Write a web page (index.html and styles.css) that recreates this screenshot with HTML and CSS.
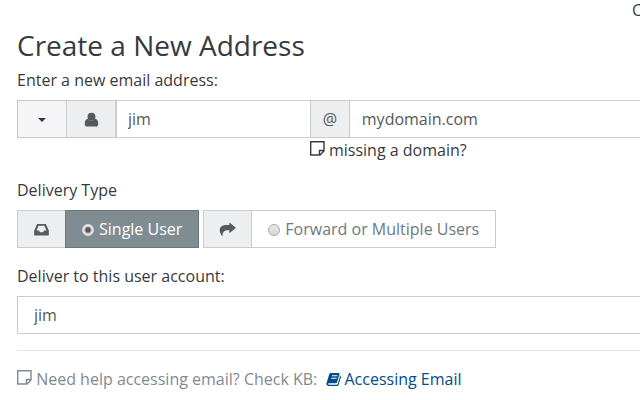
FILE: index.html
```html
<!DOCTYPE html>
<html lang="en">
  <head>
    <meta charset="utf-8" />
    <title>Create a New Address</title>
    <link rel="stylesheet" href="styles.css">
  </head>
  <body>
    <div class="topbar">C</div>
    <form class="address-form">
      <h1>Create a New Address</h1>
      <label class="form-label" for="mailbox">Enter a new email address:</label>
      <div class="address-row">
        <div class="input-group">
          <button type="button" class="addon menu-toggle" aria-label="Address options">
            <span class="caret"></span>
          </button>
          <span class="addon">
            <svg class="icon" viewBox="0 0 16 16">
              <circle cx="8" cy="5" r="4.200" />
              <path d="M4.200 7.200C2 7.500 .8 9.500 .8 12.700C.8 14.600 1.800 15.500 3.300 15.500H12.700C14.200 15.500 15.200 14.600 15.200 12.700C15.200 9.500 14 7.500 11.800 7.200C9.800 9.900 6.200 9.900 4.200 7.200Z" />
            </svg>
          </span>
          <input type="text" class="text-field name-field" id="mailbox" value="jim" />
        </div>
        <div class="input-group">
          <span class="addon at">@</span>
          <input type="text" class="text-field" aria-label="Domain" value="mydomain.com" />
        </div>
        <div class="domain-hint">
          <svg class="icon note" viewBox="0 0 15 15">
            <path d="M.7 .7H14V10L10 14H.7ZM14 9.500H9.500V14" />
          </svg>
          missing a domain?
        </div>
      </div>

      <div class="form-label" id="delivery-label">Delivery Type</div>
      <div class="delivery-types" role="radiogroup" aria-labelledby="delivery-label">
        <div class="delivery-option">
          <span class="addon">
            <svg class="icon" viewBox="0 0 16 16">
              <path fill-rule="evenodd" d="M3.400 2H12.600L15.800 9V14.500H.2V9ZM4.900 4L2.700 9H5.300L6.300 11H9.700L10.700 9H13.300L11.100 4Z" />
            </svg>
          </span>
          <label class="choice selected">
            <input type="radio" name="delivery" checked />
            Single User
          </label>
        </div>
        <div class="delivery-option">
          <span class="addon">
            <svg class="icon share" viewBox="0 0 18 16">
              <path d="M11 .5L18 6.200L11 12V8.800C6 8.300 3.500 10 3.600 15.500C-1 10 -.5 3.300 8 3.300H11Z" />
            </svg>
          </span>
          <label class="choice">
            <input type="radio" name="delivery" />
            Forward or Multiple Users
          </label>
        </div>
      </div>

      <label class="form-label" for="account">Deliver to this user account:</label>
      <input type="text" class="text-field account" id="account" value="jim" />

      <hr />
      <p class="help">
        <svg class="icon note" viewBox="0 0 15 15">
          <path d="M.7 .7H14V10L10 14H.7ZM14 9.500H9.500V14" />
        </svg>
        Need help accessing email? Check KB:
        <a href="#">
          <svg class="icon book" viewBox="0 0 16 16">
            <path fill-rule="evenodd" d="M5.500 1H13.400C14.300 1 14.700 1.600 14.400 2.400L11.800 11C11.600 11.700 11.100 12 10.400 12H3C2.300 12 2.100 12.400 2.300 12.900C2.400 13.300 2.800 13.500 3.300 13.500H11.500C12.100 13.500 12.400 13.200 12.600 12.600L15.200 3.800C15.900 4.200 16.100 4.800 15.900 5.500L13.400 13.800C13.100 14.700 12.400 15 11.500 15H3C1.200 15 0 13.400 .5 12L3.300 3C3.700 1.600 4.300 1 5.500 1ZM6.500 3.500L6.200 4.600H12L12.300 3.500ZM5.800 6L5.500 7.100H11.200L11.500 6Z" />
          </svg>Accessing Email</a>
      </p>
    </form>
  </body>
</html>
```

FILE: styles.css
```css
* {
  box-sizing: border-box;
}

body {
  margin: 0;
  overflow: hidden;
  background-color: #fff;
  color: #373a3c;
  font-family: "Open Sans", sans-serif;
  font-size: 16px;
  line-height: 24px;
}

.topbar {
  margin-right: -2px;
  height: 24px;
  line-height: 20px;
  text-align: right;
}

.address-form {
  padding-left: 17px;
}

h1 {
  margin: 4px 0 6px;
  font-size: 28px;
  font-weight: 400;
  line-height: 34px;
}

.form-label {
  display: block;
  margin-bottom: 8px;
}

.address-row {
  display: grid;
  grid-template-columns: 47% 1fr;
  margin-bottom: 16px;
}

.input-group,
.delivery-option {
  display: flex;
  height: 38px;
}

.addon {
  display: flex;
  flex: none;
  align-items: center;
  justify-content: center;
  width: 49px;
  padding: 0;
  background-color: #eceeef;
  border: 1px solid #ccc;
  border-right: 0;
  color: #55595c;
}

.addon.at {
  width: 39px;
}

.delivery-option .addon {
  width: 48px;
}

.menu-toggle {
  background-color: #f5f5f7;
  border-color: #c3c8cb;
}

.caret {
  margin-top: 2px;
  border: 4px solid transparent;
  border-top-color: #373a3c;
  border-bottom: 0;
}

.text-field {
  flex: 1;
  min-width: 0;
  height: 38px;
  padding: 0 12px;
  background-color: #fff;
  border: 1px solid #ccc;
  border-right: 0;
  border-radius: 0;
  color: #55595c;
  font: inherit;
}

.name-field {
  padding: 0 11px;
  border-left-width: 2px;
}

.icon {
  width: 15px;
  height: 15px;
  fill: currentColor;
}

.icon.share {
  width: 17px;
}

.icon.note {
  fill: none;
  stroke: currentColor;
  stroke-width: 1.4;
}

.icon.book {
  margin: 0 3px 0 5px;
  vertical-align: -2px;
}

.domain-hint {
  grid-column: 2;
}

.delivery-types {
  display: flex;
  gap: 4px;
  margin-bottom: 16px;
}

.choice {
  display: flex;
  align-items: center;
  gap: 5px;
  padding: 0 16px;
  border: 1px solid #ccc;
  color: #6c7a82;
}

.choice.selected {
  background-color: #7f8c92;
  border-color: #6b777d;
  color: #fff;
}

.choice input {
  appearance: none;
  width: 12px;
  height: 12px;
  margin: 2px 0 0;
  border: 1px solid #aaa;
  border-radius: 50%;
  background: linear-gradient(#e8e8e8, #d8d8d8);
}

.choice input:checked {
  border-color: #ddd;
  background: radial-gradient(circle, #555 0 2px, #e4e4e4 4px);
}

.account {
  display: block;
  width: 100%;
  padding: 0 16px;
}

hr {
  margin: 16px 0;
  border: 0;
  border-top: 1px solid #e5e5e5;
}

.help {
  margin: 0;
  color: #818a91;
}

.help a {
  color: #014c8c;
  text-decoration: none;
}
```
